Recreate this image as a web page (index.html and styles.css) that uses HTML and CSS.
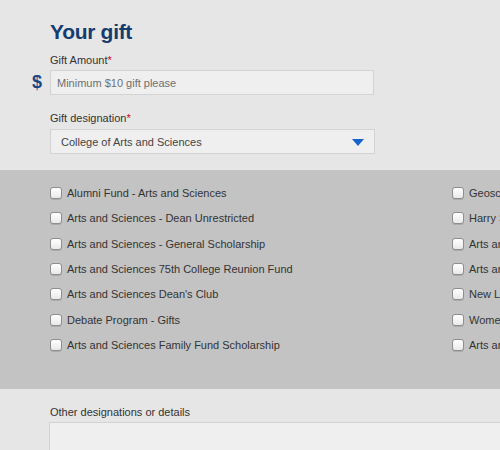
FILE: index.html
```html
<!DOCTYPE html>
<html>
<head>
<meta charset="utf-8">
<link rel="stylesheet" href="styles.css">
</head>
<body>
<div class="page">
  <section class="gift">
    <h1 class="title">Your gift</h1>
    <label class="field-label">Gift Amount<span class="req">*</span></label>
    <div class="amount-row">
      <span class="dollar">$</span>
      <input class="text-input" type="text" placeholder="Minimum $10 gift please">
    </div>
    <label class="field-label field-label--spaced">Gift designation<span class="req">*</span></label>
    <div class="select">
      <span class="select-text">College of Arts and Sciences</span>
      <svg class="select-arrow" width="12" height="7" viewBox="0 0 12 7"><polygon points="0,0 12,0 6,7" fill="#1763c9"/></svg>
    </div>
  </section>

  <section class="band">
    <div class="options">
      <div class="col">
        <label class="opt"><input type="checkbox" class="cb"><span>Alumni Fund - Arts and Sciences</span></label>
        <label class="opt"><input type="checkbox" class="cb"><span>Arts and Sciences - Dean Unrestricted</span></label>
        <label class="opt"><input type="checkbox" class="cb"><span>Arts and Sciences - General Scholarship</span></label>
        <label class="opt"><input type="checkbox" class="cb"><span>Arts and Sciences 75th College Reunion Fund</span></label>
        <label class="opt"><input type="checkbox" class="cb"><span>Arts and Sciences Dean's Club</span></label>
        <label class="opt"><input type="checkbox" class="cb"><span>Debate Program - Gifts</span></label>
        <label class="opt"><input type="checkbox" class="cb"><span>Arts and Sciences Family Fund Scholarship</span></label>
      </div>
      <div class="col">
        <label class="opt"><input type="checkbox" class="cb"><span>Geosciences Fund</span></label>
        <label class="opt"><input type="checkbox" class="cb"><span>Harry S. Truman Scholarship</span></label>
        <label class="opt"><input type="checkbox" class="cb"><span>Arts and Sciences Honors Program</span></label>
        <label class="opt"><input type="checkbox" class="cb"><span>Arts and Sciences Research Fund</span></label>
        <label class="opt"><input type="checkbox" class="cb"><span>New Leaders Fund</span></label>
        <label class="opt"><input type="checkbox" class="cb"><span>Women's Studies Program</span></label>
        <label class="opt"><input type="checkbox" class="cb"><span>Arts and Sciences Library Fund</span></label>
      </div>
    </div>
  </section>

  <section class="other">
    <label class="field-label">Other designations or details</label>
    <textarea class="textarea"></textarea>
  </section>
</div>
</body>
</html>
```

FILE: styles.css
```css
html, body {
  margin: 0;
  padding: 0;
  overflow: hidden;
  background: #e6e6e6;
}

body {
  font-family: "Liberation Sans", Arial, sans-serif;
  font-size: 11px;
  color: #333333;
}

.page {
  width: 900px;
}

.gift {
  padding: 20px 0 16px 50px;
}

.title {
  margin: 0 0 10px 0;
  font-size: 21px;
  line-height: 24px;
  font-weight: bold;
  letter-spacing: -0.3px;
  color: #163b6e;
}

.field-label {
  display: block;
  font-size: 11px;
  line-height: 13px;
  color: #333333;
  margin-bottom: 3px;
}

.field-label--spaced {
  margin-top: 17px;
  margin-bottom: 4px;
}

.req {
  color: #d0021b;
}

.amount-row {
  display: flex;
  align-items: center;
  margin-left: -18px;
}

.dollar {
  width: 18px;
  font-size: 18px;
  font-weight: bold;
  line-height: 25px;
  color: #1d4784;
}

.text-input {
  box-sizing: border-box;
  width: 324px;
  height: 25px;
  margin: 0;
  padding: 0 6px;
  border: 1px solid #d3d3d3;
  background: #efefef;
  font-family: "Liberation Sans", Arial, sans-serif;
  font-size: 11px;
  color: #444444;
  outline: none;
}

.text-input::placeholder {
  color: #6f6f6f;
}

.select {
  box-sizing: border-box;
  width: 325px;
  height: 25px;
  display: flex;
  align-items: center;
  justify-content: space-between;
  padding: 0 10px 0 10px;
  border: 1px solid #d3d3d3;
  background: #efefef;
  color: #444444;
}

.select-arrow {
  display: block;
  margin-top: 1px;
}

.band {
  background: #c3c3c3;
  height: 219px;
  box-sizing: border-box;
  padding: 10.33px 0 0 50px;
}

.options {
  display: grid;
  grid-template-columns: 402px 402px;
}

.col {
  display: flex;
  flex-direction: column;
}

.opt {
  height: 25.333px;
  display: flex;
  align-items: center;
  gap: 5px;
  white-space: nowrap;
  color: #333333;
}

.cb {
  -webkit-appearance: none;
  appearance: none;
  box-sizing: border-box;
  width: 12px;
  height: 12px;
  margin: 0;
  border: 1px solid #8e8e8e;
  border-radius: 3px;
  background: linear-gradient(#ffffff, #e9e9e9);
  box-shadow: 0 1px 0 rgba(0,0,0,0.12);
  flex: none;
}

.other {
  padding: 17px 0 0 49px;
}

.other .field-label {
  padding-left: 1px;
}

.textarea {
  display: block;
  box-sizing: border-box;
  width: 600px;
  height: 80px;
  margin: 0;
  border: 1px solid #d3d3d3;
  background: #efefef;
  resize: none;
  outline: none;
}
```
